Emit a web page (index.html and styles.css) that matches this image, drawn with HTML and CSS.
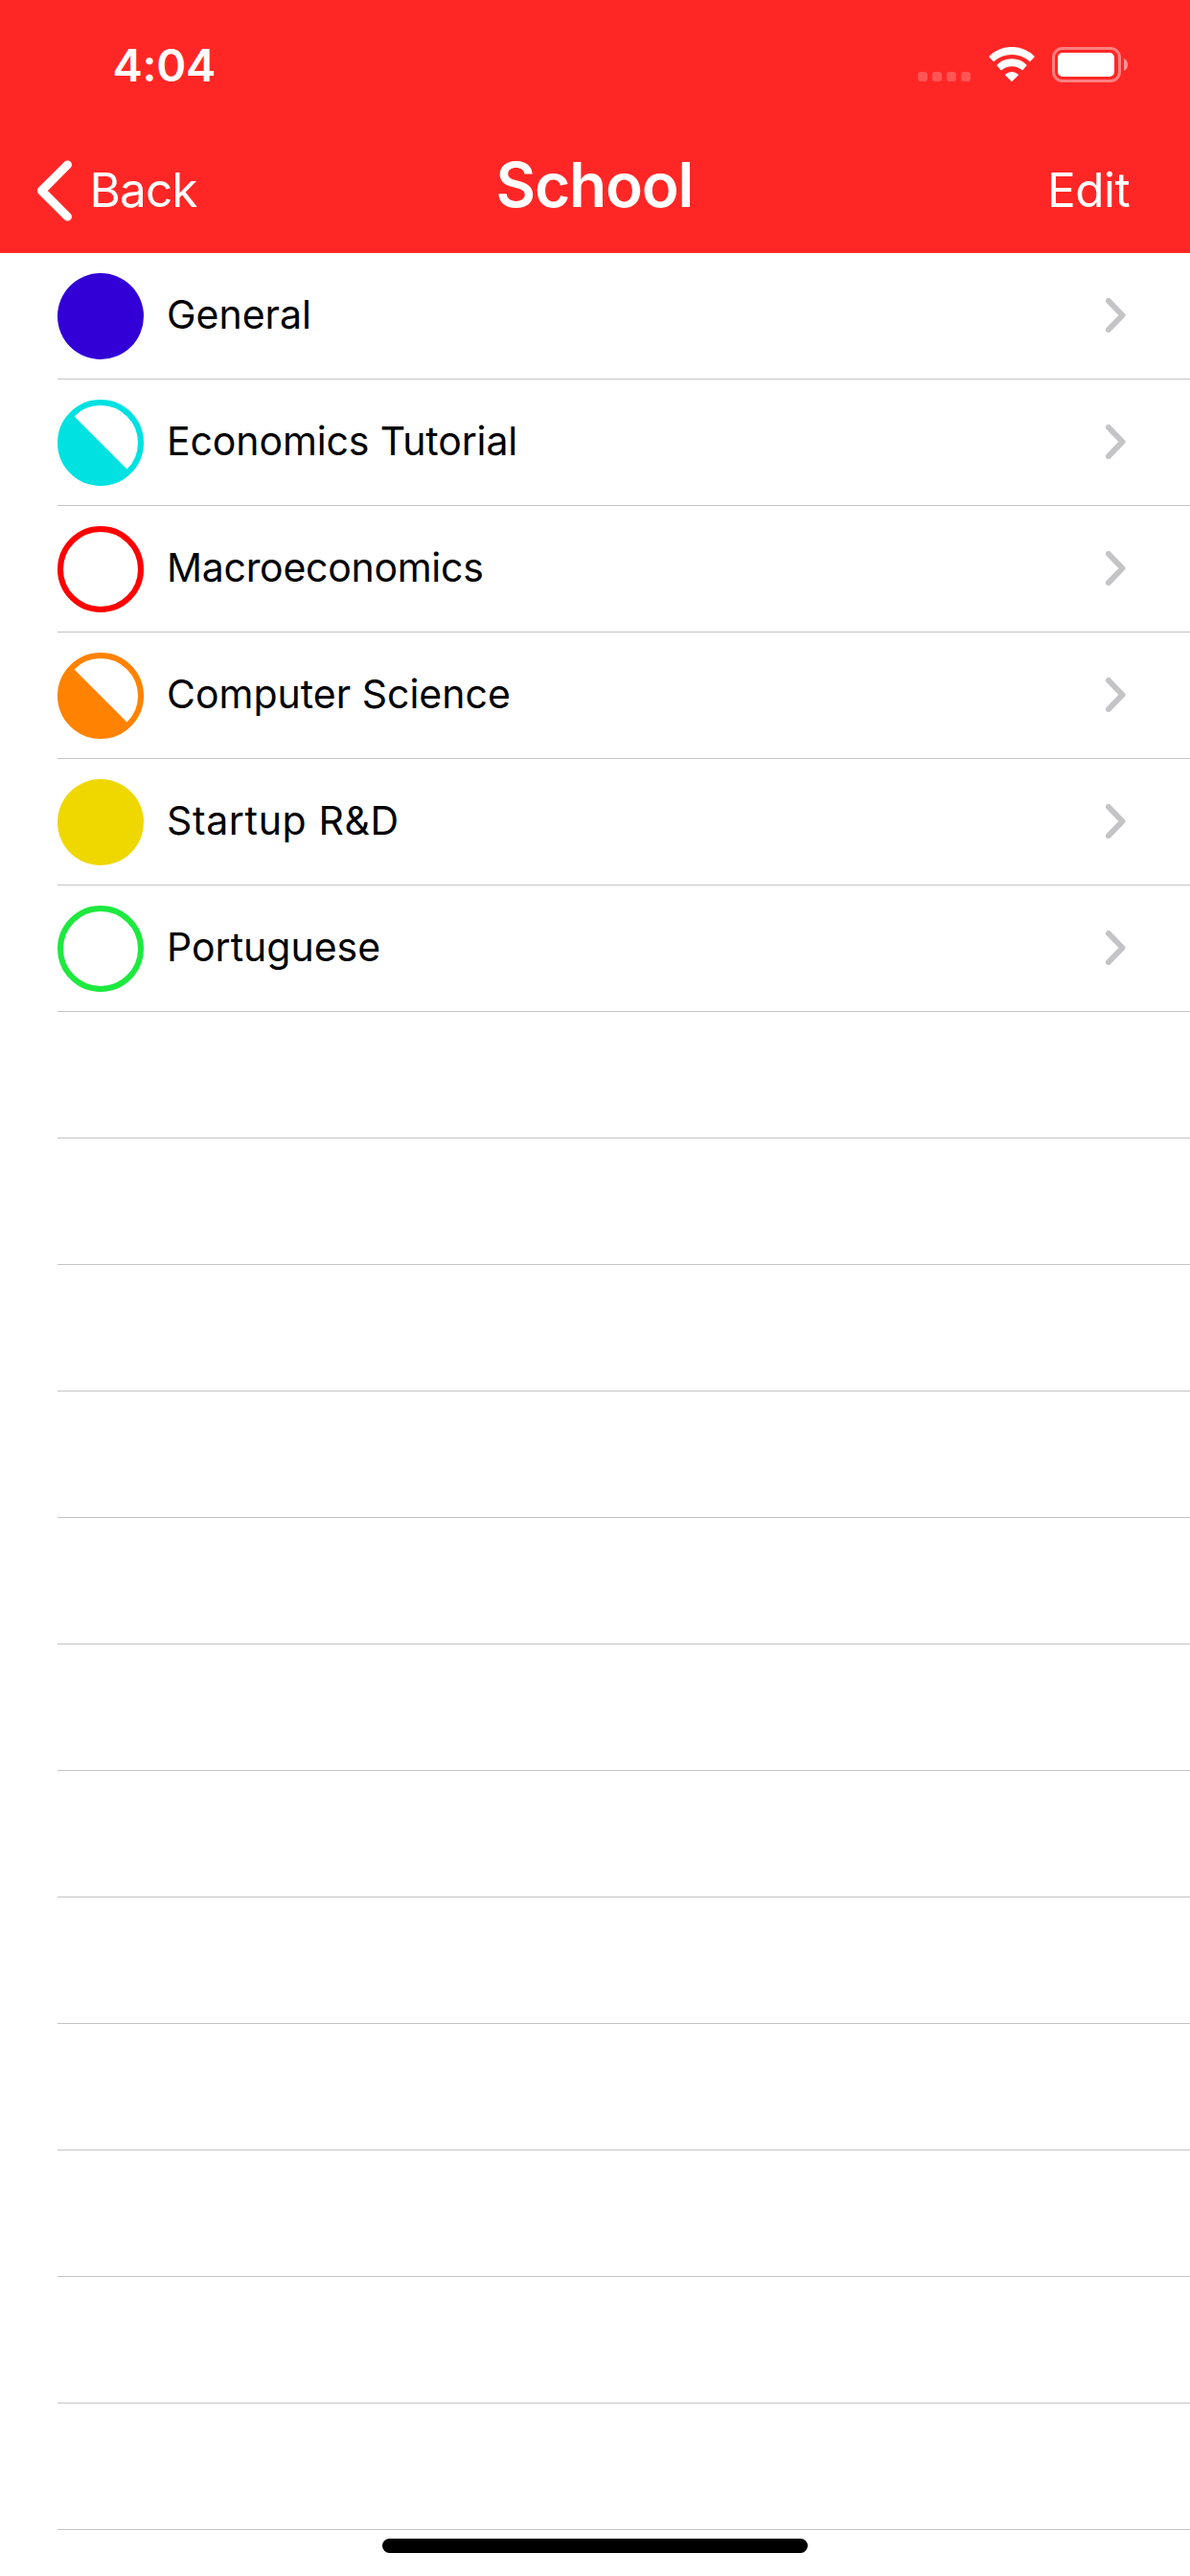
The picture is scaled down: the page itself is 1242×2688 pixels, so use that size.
FILE: index.html
```html
<!DOCTYPE html>
<html lang="en">
<head>
<meta charset="utf-8">
<title>School</title>
<link rel="stylesheet" href="styles.css">
</head>
<body>
<svg class="defs" width="0" height="0" aria-hidden="true">
  <symbol id="chevron" viewBox="0 0 21 36"><path d="M3 3 17.5 18 3 33" fill="none" stroke="#c4c4c6" stroke-width="6" stroke-linecap="round" stroke-linejoin="round"/></symbol>
  <symbol id="full" viewBox="0 0 90 90"><circle cx="45" cy="45" r="45" fill="currentColor"/></symbol>
  <symbol id="ring" viewBox="0 0 90 90"><circle cx="45" cy="45" r="42" fill="none" stroke="currentColor" stroke-width="6"/></symbol>
  <symbol id="half" viewBox="0 0 90 90"><circle cx="45" cy="45" r="42" fill="none" stroke="currentColor" stroke-width="6"/><path d="M15.3 15.3A42 42 0 0 0 74.7 74.7Z" fill="currentColor"/></symbol>
</svg>
<div class="screen">
  <header class="header">
    <div class="status">
      <span class="time">4:04</span>
      <div class="indicators">
        <svg class="signal" viewBox="0 0 55 10"><g fill="#fff" fill-opacity=".22"><rect width="10" height="10" rx="3"/><rect x="15" width="10" height="10" rx="3"/><rect x="30" width="10" height="10" rx="3"/><rect x="45" width="10" height="10" rx="3"/></g></svg>
        <svg class="wifi" viewBox="0 0 48 36"><g fill="#fff" stroke="#fff" stroke-width="1.2" stroke-linejoin="round"><path d="M.8 10.1A33 33 0 0 1 47.2 10.1L42.9 14.5A28.4 28.4 0 0 0 5.1 14.5Z"/><path d="M9 19.1A21.3 21.3 0 0 1 39 19.1L35.1 23.7A17.1 17.1 0 0 0 12.9 23.7Z"/><path d="M17.6 29.1A9.5 9.5 0 0 1 30.4 29.1L24 35.4Z"/></g></svg>
        <svg class="battery" viewBox="0 0 80 37"><rect x="1.5" y="1.5" width="69" height="34" rx="9.5" fill="none" stroke="#fff" stroke-opacity=".42" stroke-width="3"/><rect x="6" y="6" width="59" height="25" rx="5" fill="#fff"/><path d="M75 12Q79 14 79 18.5T75 25Z" fill="#fff" fill-opacity=".5"/></svg>
      </div>
    </div>
    <nav class="nav">
      <a class="back"><svg class="back-icon" viewBox="0 0 38 64"><path d="M32.5 4.9 5.4 32 32.5 59.1" fill="none" stroke="#fff" stroke-width="9" stroke-linecap="round" stroke-linejoin="round"/></svg><span class="back-text">Back</span></a>
      <h1 class="title">School</h1>
      <a class="edit">Edit</a>
    </nav>
  </header>
  <ul class="list">
    <li class="row"><svg class="dot blue"><use href="#full"/></svg><span class="label">General</span><svg class="chevron"><use href="#chevron"/></svg></li>
    <li class="row"><svg class="dot cyan"><use href="#half"/></svg><span class="label economics">Economics Tutorial</span><svg class="chevron"><use href="#chevron"/></svg></li>
    <li class="row"><svg class="dot red"><use href="#ring"/></svg><span class="label macro">Macroeconomics</span><svg class="chevron"><use href="#chevron"/></svg></li>
    <li class="row"><svg class="dot orange"><use href="#half"/></svg><span class="label">Computer Science</span><svg class="chevron"><use href="#chevron"/></svg></li>
    <li class="row"><svg class="dot yellow"><use href="#full"/></svg><span class="label startup">Startup R&amp;D</span><svg class="chevron"><use href="#chevron"/></svg></li>
    <li class="row"><svg class="dot green"><use href="#ring"/></svg><span class="label">Portuguese</span><svg class="chevron"><use href="#chevron"/></svg></li>
    <li class="row"></li>
    <li class="row"></li>
    <li class="row"></li>
    <li class="row"></li>
    <li class="row"></li>
    <li class="row"></li>
    <li class="row"></li>
    <li class="row"></li>
    <li class="row"></li>
    <li class="row"></li>
    <li class="row"></li>
    <li class="row"></li>
  </ul>
  <div class="home-indicator"></div>
</div>
</body>
</html>
```
FILE: styles.css
```css
* { box-sizing: border-box; }
body { margin: 0; background: #fff; font-family: Inter, "Liberation Sans", sans-serif; color: #000; }
.defs { display: block; }
.screen { width: 1242px; height: 2688px; display: flex; flex-direction: column; overflow: hidden; }

.header { height: 264px; background: #ff2726; color: #fff; }
.status { height: 132px; display: flex; justify-content: space-between; padding: 0 64px 0 117.5px; }
.time { font-size: 47px; font-weight: 600; line-height: 136px; letter-spacing: -0.26px; }
.indicators { display: flex; align-items: flex-start; padding-top: 49px; }
.indicators svg { display: block; }
.signal { width: 55px; height: 10px; margin: 26px 18.5px 0 0; }
.wifi { width: 48px; height: 36px; margin-right: 18.5px; }
.battery { width: 80px; height: 37px; }

.nav { height: 132px; display: grid; grid-template-columns: 517.5px 1fr 149px; }
.back { display: flex; padding-left: 38px; }
.back-icon { width: 38px; height: 64px; margin: 34.5px 17.5px 0 0; }
.back-text, .edit { font-size: 49.5px; font-weight: 400; line-height: 132px; letter-spacing: -0.9px; }
.edit { letter-spacing: -0.5px; }
.title { margin: 0; font-size: 64px; font-weight: 600; line-height: 121px; letter-spacing: -1.2px; }

.list { list-style: none; margin: 0 0 0 60px; padding: 0; }
.row { height: 132px; display: flex; align-items: flex-start; border-bottom: 1px solid #c4c4c6; }
.dot { width: 90px; height: 90px; margin: 21px 24px 0 0; }
.label { flex: 1; font-size: 41px; line-height: 128px; }
.economics { letter-spacing: -0.11px; }
.macro { letter-spacing: -0.28px; }
.startup { letter-spacing: 0.64px; }
.chevron { width: 21px; height: 36px; margin: 47px 67px 0 0; }
.blue { color: #3200d7; }
.cyan { color: #00e1e1; }
.red { color: #ff0000; }
.orange { color: #ff8200; }
.yellow { color: #efd700; }
.green { color: #1de93f; }

.home-indicator { width: 444px; height: 15px; margin: 9px 0 0 399px; border-radius: 8px; background: #000; }
```
